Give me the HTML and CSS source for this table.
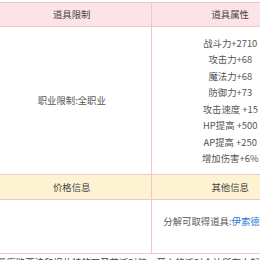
FILE: index.html
```html
<!DOCTYPE html>
<html>
<head>
<meta charset="utf-8">
<link rel="stylesheet" href="styles.css">
</head>
<body>
<div class="wrap">
  <table class="info">
    <tr class="head pink">
      <th>道具限制</th>
      <th>道具属性</th>
    </tr>
    <tr class="main">
      <td>职业限制:全职业</td>
      <td>
        <div class="attrs">
          <div>战斗力+2710</div>
          <div>攻击力+68</div>
          <div>魔法力+68</div>
          <div>防御力+73</div>
          <div>攻击速度 +15</div>
          <div>HP提高 +500</div>
          <div>AP提高 +250</div>
          <div>增加伤害+6%</div>
        </div>
      </td>
    </tr>
    <tr class="head yellow">
      <th>价格信息</th>
      <th>其他信息</th>
    </tr>
    <tr class="extra">
      <td></td>
      <td>分解可取得道具:<span class="link">伊索德的结晶体</span></td>
    </tr>
  </table>
  <p class="desc">恶魔路西法和坦伯特的万圣节派对装，开心的派对会让所有人起舞吧。</p>
</div>
</body>
</html>
```

FILE: styles.css
```css
html, body {
  margin: 0;
  padding: 0;
  background: #ffffff;
  overflow: hidden;
}
body {
  padding-top: 2px;
  font-family: "Noto Sans CJK SC", "Noto Sans", sans-serif;
  font-size: 9.4px;
  color: #555555;
}
.wrap {
  margin-left: -8px;
  width: 340px;
}
.info {
  border-collapse: collapse;
  table-layout: fixed;
  width: 318px;
}
.info th,
.info td {
  border: 1px solid #f2c4cb;
  padding: 0;
  text-align: center;
  vertical-align: middle;
  line-height: 16.5px;
  white-space: nowrap;
  overflow: visible;
}
.info th {
  font-weight: normal;
  color: #444444;
  height: 23px;
}
.pink th {
  background: #fce3e8;
}
.yellow th {
  background: #fdf3d2;
  height: 24px;
}
.main td {
  height: 147px;
}
.extra td {
  height: 40px;
  padding-top: 13px;
  vertical-align: top;
}
.link {
  color: #2a78d6;
}
.desc {
  margin: 0;
  padding-left: 5px;
  line-height: 16.5px;
  white-space: nowrap;
  color: #444444;
}
```
